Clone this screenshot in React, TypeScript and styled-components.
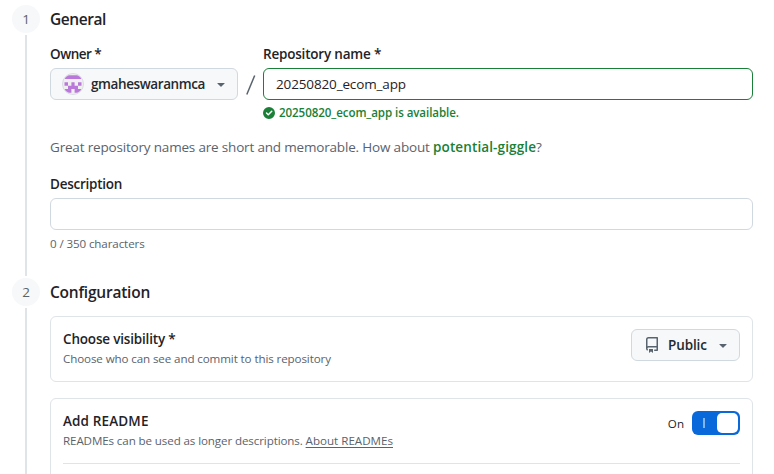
import React from 'react';
import styled, { createGlobalStyle } from 'styled-components';

const GlobalStyle = createGlobalStyle`
  * { box-sizing: border-box; }
  html, body { margin: 0; height: 474px; overflow: hidden; background: #fff; }
  body { font-family: 'Open Sans', 'Noto Sans', sans-serif; color: #1f2328; }
`;

const Page = styled.main`
  padding: 5px 21px 0 12px;
  height: 474px;
  overflow: hidden;
`;
const Step = styled.section<{ $height: number }>`
  display: flex;
  gap: 10px;
  height: ${p => p.$height}px;
`;
const Rail = styled.div`
  display: flex;
  flex-direction: column;
  align-items: center;
  width: 28px;
  flex: none;
`;
const StepNumber = styled.div`
  width: 28px;
  height: 28px;
  border-radius: 50%;
  background: #f6f8fa;
  color: #59636e;
  font-size: 13.5px;
  line-height: 29px;
  text-align: center;
`;
const RailLine = styled.div`
  flex: 1;
  width: 2px;
  margin: 2px 0;
  background: #dfe4e8;
`;
const StepBody = styled.div`
  flex: 1;
  min-width: 0;
`;
const Heading = styled.h2<{ $track: number }>`
  margin: 0;
  font-size: 15.5px;
  font-weight: 600;
  line-height: 28px;
  letter-spacing: ${p => p.$track}px;
`;
const Label = styled.label<{ $track: number }>`
  display: block;
  height: 20px;
  font-size: 13.5px;
  font-weight: 600;
  line-height: 20px;
  letter-spacing: ${p => p.$track}px;
  white-space: nowrap;
`;
const NameRow = styled.div`
  display: flex;
  margin-top: 11px;
`;
const Field = styled.div<{ $grow?: boolean; $top?: number }>`
  display: flex;
  flex-direction: column;
  gap: 4px;
  flex: ${p => (p.$grow ? '1' : 'none')};
  margin-top: ${p => p.$top ?? 0}px;
`;
const Slash = styled.div`
  width: 25px;
  padding-top: 24px;
  svg { display: block; margin-left: 8px; }
`;
const MenuButton = styled.button<{ $width: number; $track: number; $left: number; $gap: number }>`
  display: flex;
  align-items: center;
  gap: ${p => p.$gap}px;
  width: ${p => p.$width}px;
  height: 32px;
  flex: none;
  padding: 0 8px 0 ${p => p.$left}px;
  border: 1px solid #d1d9e0;
  border-radius: 6px;
  background: #f6f8fa;
  color: #25292e;
  font: 600 13.5px/20px 'Open Sans', 'Noto Sans', sans-serif;
  letter-spacing: ${p => p.$track}px;
  svg { flex: none; }
`;
const ButtonText = styled.span`
  flex: 1;
  min-width: 0;
  text-align: left;
`;
const TextInput = styled.input<{ $valid?: boolean }>`
  width: 100%;
  height: 32px;
  padding: 0 12px;
  border: 1px solid ${p => (p.$valid ? '#1a7f37' : '#d1d9e0')};
  border-radius: 6px;
  outline: none;
  background: #fff;
  color: #1f2328;
  font: 13.5px/20px 'Open Sans', 'Noto Sans', sans-serif;
  letter-spacing: -0.14px;
`;
const Validation = styled.div`
  display: flex;
  align-items: center;
  gap: 4px;
  height: 17px;
  margin-bottom: 1px;
  color: #1a7f37;
  font-size: 11.6px;
  font-weight: 600;
  letter-spacing: -0.09px;
`;
const Hint = styled.p`
  margin: 15px 0 0;
  height: 20px;
  color: #59636e;
  font-size: 13.5px;
  line-height: 20px;
  letter-spacing: -0.18px;
`;
const Suggestion = styled.span`
  color: #1a7f37;
  font-weight: 600;
  letter-spacing: 0.12px;
`;
const Caption = styled.div`
  height: 18px;
  margin-top: 1px;
  color: #59636e;
  font-size: 11.6px;
  line-height: 18px;
  letter-spacing: -0.11px;
`;
const Card = styled.div<{ $top: number; $height: number }>`
  height: ${p => p.$height}px;
  margin-top: ${p => p.$top}px;
  padding: 12px;
  border: 1px solid #dfe4e8;
  border-radius: 6px;
`;
const CardRow = styled.div`
  display: flex;
  justify-content: space-between;
  align-items: flex-start;
`;
const ReadmeLink = styled.a`
  color: #59636e;
  text-decoration: underline;
  text-underline-offset: 2px;
  letter-spacing: 0;
`;
const Divider = styled.div`
  height: 1px;
  margin-top: 13px;
  background: #dfe4e8;
`;
const SwitchGroup = styled.div`
  display: flex;
  align-items: center;
  gap: 8px;
  font-size: 11.6px;
`;
const Switch = styled.button`
  display: flex;
  align-items: center;
  justify-content: space-between;
  width: 48px;
  height: 24px;
  padding: 0 2px 0 11px;
  border: 0;
  border-radius: 6px;
  background: #0969da;
`;
const SwitchMark = styled.span`
  width: 2px;
  height: 10px;
  background: #84b4ec;
`;
const SwitchKnob = styled.span`
  width: 21px;
  height: 20px;
  border-radius: 5px;
  background: #fff;
`;

const Caret = () => (
  <svg width="16" height="16" viewBox="0 0 16 16" fill="#59636e">
    <path d="m4.427 7.427 3.396 3.396a.25.25 0 0 0 .354 0l3.396-3.396A.25.25 0 0 0 11.396 7H4.604a.25.25 0 0 0-.177.427Z" />
  </svg>
);

const RepoIcon = () => (
  <svg width="16" height="16" viewBox="0 0 16 16" fill="#59636e">
    <path d="M2 2.5A2.5 2.5 0 0 1 4.5 0h8.75a.75.75 0 0 1 .75.75v12.5a.75.75 0 0 1-.75.75h-2.5a.75.75 0 0 1 0-1.5h1.75v-2h-8a1 1 0 0 0-.714 1.7.75.75 0 1 1-1.072 1.05A2.495 2.495 0 0 1 2 11.5Zm10.5-1h-8a1 1 0 0 0-1 1v6.708A2.486 2.486 0 0 1 4.5 9h8ZM5 12.25a.25.25 0 0 1 .25-.25h3.5a.25.25 0 0 1 .25.25v3.25a.25.25 0 0 1-.4.2l-1.45-1.087a.249.249 0 0 0-.3 0L5.4 15.7a.25.25 0 0 1-.4-.2Z" />
  </svg>
);

const CheckIcon = () => (
  <svg width="12" height="12" viewBox="0 0 12 12" fill="#1a7f37">
    <path fillRule="evenodd" d="M6 0a6 6 0 1 1 0 12A6 6 0 0 1 6 0Zm3.28 4.78a.75.75 0 0 0-1.06-1.06L5.25 6.69 4.03 5.47a.75.75 0 0 0-1.06 1.06l1.75 1.75a.75.75 0 0 0 1.06 0Z" />
  </svg>
);

const Avatar = () => (
  <svg width="22" height="22" viewBox="0 0 22 22">
    <defs>
      <clipPath id="avatar-round"><circle cx="11" cy="11" r="10" /></clipPath>
    </defs>
    <circle cx="11" cy="11" r="10.5" fill="#f0f0f0" stroke="#d9dce0" />
    <g clipPath="url(#avatar-round)" fill="#ba79da">
      <path d="M2.5 2.3h17v3.8h-17zM2.5 9.3H6v3.4h3.4V9.3h3.2v3.4H16V9.3h3.5v3.4H16v3.4h3.5v3.6h-6.9v-3.6H9.4v3.6H2.5v-3.6H6v-3.4H2.5z" />
    </g>
  </svg>
);

export default function App() {
  return (
    <>
      <GlobalStyle />
      <Page>
        <Step $height={273}>
          <Rail><StepNumber>1</StepNumber><RailLine /></Rail>
          <StepBody>
            <Heading $track={-0.43}>General</Heading>
            <NameRow>
              <Field>
                <Label $track={-0.5}>Owner *</Label>
                <MenuButton $width={188} $track={-0.4} $left={11} $gap={7}>
                  <Avatar /><ButtonText>gmaheswaranmca</ButtonText><Caret />
                </MenuButton>
              </Field>
              <Slash>
                <svg width="10" height="32" viewBox="0 0 10 32"><path d="M0.8 26.5 8.7 7.5" stroke="#59636e" strokeWidth="1.5" /></svg>
              </Slash>
              <Field $grow>
                <Label $track={-0.2}>Repository name *</Label>
                <TextInput $valid defaultValue="20250820_ecom_app" />
                <Validation><CheckIcon />20250820_ecom_app is available.</Validation>
              </Field>
            </NameRow>
            <Hint>
              Great repository names are short and memorable. How about <Suggestion>potential-giggle</Suggestion>?
            </Hint>
            <Field $top={17}>
              <Label $track={-0.25}>Description</Label>
              <TextInput />
              <Caption>0 / 350 characters</Caption>
            </Field>
          </StepBody>
        </Step>
        <Step $height={300}>
          <Rail><StepNumber>2</StepNumber><RailLine /></Rail>
          <StepBody>
            <Heading $track={-0.22}>Configuration</Heading>
            <Card $top={10} $height={66}>
              <CardRow>
                <div>
                  <Label $track={-0.18}>Choose visibility *</Label>
                  <Caption>Choose who can see and commit to this repository</Caption>
                </div>
                <MenuButton $width={109} $track={-0.12} $left={12} $gap={8}>
                  <RepoIcon /><ButtonText>Public</ButtonText><Caret />
                </MenuButton>
              </CardRow>
            </Card>
            <Card $top={16} $height={160}>
              <CardRow>
                <div>
                  <Label $track={0.14}>Add README</Label>
                  <Caption>READMEs can be used as longer descriptions. <ReadmeLink>About READMEs</ReadmeLink></Caption>
                </div>
                <SwitchGroup>
                  On
                  <Switch aria-label="Add README"><SwitchMark /><SwitchKnob /></Switch>
                </SwitchGroup>
              </CardRow>
              <Divider />
            </Card>
          </StepBody>
        </Step>
      </Page>
    </>
  );
}
